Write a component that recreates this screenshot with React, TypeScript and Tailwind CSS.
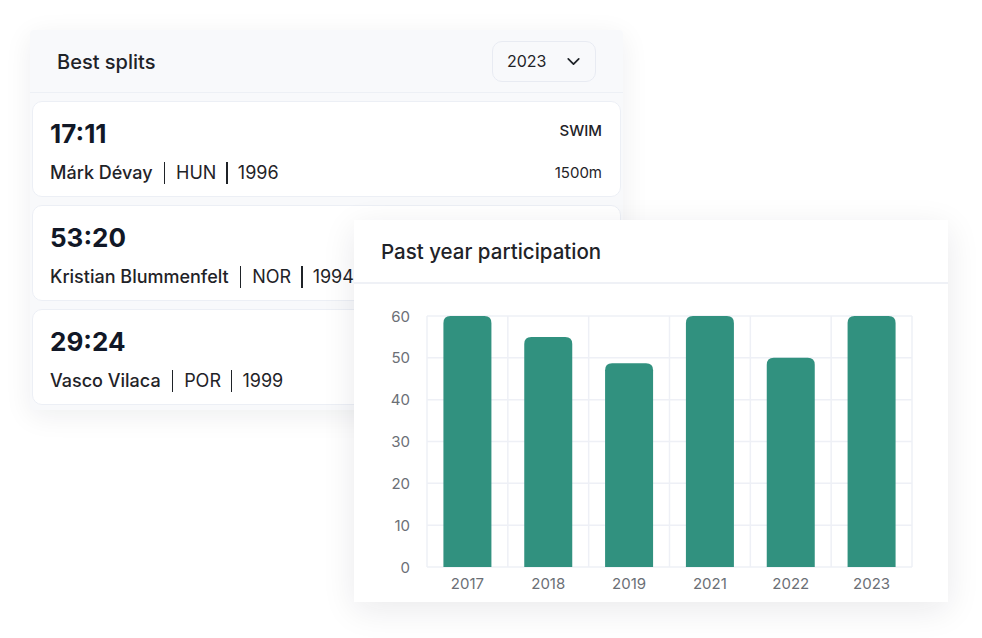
import { ChevronDown } from "lucide-react";

type Split = {
  time: string;
  name: string;
  country: string;
  born: string;
  sport?: string;
  distance?: string;
};

const SPLITS: Split[] = [
  { time: "17:11", name: "Márk Dévay", country: "HUN", born: "1996", sport: "SWIM", distance: "1500m" },
  { time: "53:20", name: "Kristian Blummenfelt", country: "NOR", born: "1994" },
  { time: "29:24", name: "Vasco Vilaca", country: "POR", born: "1999" },
];

const YEARS = [
  { year: "2017", value: 60 },
  { year: "2018", value: 55 },
  { year: "2019", value: 48.7 },
  { year: "2021", value: 60 },
  { year: "2022", value: 50 },
  { year: "2023", value: 60 },
];

const FONT = "font-['Inter','Liberation_Sans',sans-serif]";

function SplitRow({ s }: { s: Split }) {
  return (
    <div className="rounded-[10px] border border-[#eceff5] bg-white pl-[17px] pr-[18px] pt-[15px] pb-[11px]">
      <div className="flex items-start justify-between">
        <span className="text-[26px] leading-[34px] font-bold text-[#111827]">{s.time}</span>
        {s.sport && (
          <span className="mt-[4px] text-[15px] leading-[20px] font-medium text-[#1f2328]">{s.sport}</span>
        )}
      </div>
      <div className="mt-[10px] flex items-center justify-between">
        <div className="flex items-center text-[18px] leading-[24px] text-[#1f2328]">
          <span className="font-medium">{s.name}</span>
          <span className="mx-[11px] h-[22px] w-[1.5px] bg-[#1f2328]" />
          <span>{s.country}</span>
          <span className="mx-[10px] h-[22px] w-[1.5px] bg-[#1f2328]" />
          <span>{s.born}</span>
        </div>
        {s.distance && <span className="text-[15px] leading-[20px] text-[#1f2328]">{s.distance}</span>}
      </div>
    </div>
  );
}

function BestSplits() {
  return (
    <div className="w-[593px] overflow-hidden rounded-[4px] bg-[#f8f9fb] shadow-[0_6px_28px_rgba(17,24,39,0.07)]">
      <div className="flex h-[63px] items-center justify-between border-b border-[#edf0f5] pl-[27px] pr-[27px]">
        <span className="pt-[2px] text-[20px] font-medium text-[#1f2328]">Best splits</span>
        <div className="flex h-[41px] w-[104px] items-center justify-between rounded-[10px] border border-[#e8ebf2] bg-[#f8f9fb] pl-[14px] pr-[11px]">
          <span className="text-[16px] text-[#1f2328]">2023</span>
          <ChevronDown size={21} strokeWidth={2} className="text-[#1f2328]" />
        </div>
      </div>
      <div className="flex flex-col gap-[8px] px-[2px] pt-[8px] pb-[5px]">
        {SPLITS.map((s) => (
          <SplitRow key={s.time} s={s} />
        ))}
      </div>
    </div>
  );
}

function ParticipationChart() {
  // plot area in svg coordinates
  const left = 73;
  const right = 558;
  const top = 32;
  const bottom = 283;
  const max = 60;
  const colW = (right - left) / YEARS.length;
  const barW = 48;
  const y = (v: number) => bottom - (v / max) * (bottom - top);

  return (
    <div className="absolute left-[354px] top-[220px] w-[594px] bg-white shadow-[0_8px_32px_rgba(17,24,39,0.09)]">
      <div className="flex h-[64px] items-center border-b-[2px] border-[#eff1f6] px-[27px] pt-[3px]">
        <span className="text-[20.5px] font-medium text-[#1f2328]">Past year participation</span>
      </div>
      <svg width={594} height={318} className="block">
        {[0, 10, 20, 30, 40, 50, 60].map((t) => (
          <g key={t}>
            <line x1={left} x2={right} y1={y(t)} y2={y(t)} stroke="#eef0f6" strokeWidth={1.5} />
            <text
              x={56}
              y={y(t)}
              textAnchor="end"
              dominantBaseline="central"
              fontSize={15}
              fill="#6b6f76"
              fontFamily="Inter, 'Liberation Sans', sans-serif"
            >
              {t}
            </text>
          </g>
        ))}
        {YEARS.map((_, i) => (
          <line
            key={i}
            x1={left + colW * i}
            x2={left + colW * i}
            y1={top}
            y2={bottom}
            stroke="#eef0f6"
            strokeWidth={1.5}
          />
        ))}
        <line x1={right} x2={right} y1={top} y2={bottom} stroke="#eef0f6" strokeWidth={1.5} />
        {YEARS.map((d, i) => {
          const cx = left + colW * (i + 0.5);
          const x0 = cx - barW / 2;
          const y0 = y(d.value);
          const r = 7;
          const path = `M${x0},${bottom} L${x0},${y0 + r} Q${x0},${y0} ${x0 + r},${y0} L${x0 + barW - r},${y0} Q${x0 + barW},${y0} ${x0 + barW},${y0 + r} L${x0 + barW},${bottom} Z`;
          return (
            <g key={d.year}>
              <path d={path} fill="#31917f" />
              <text
                x={cx}
                y={299}
                textAnchor="middle"
                dominantBaseline="central"
                fontSize={15}
                fill="#6b6f76"
                fontFamily="Inter, 'Liberation Sans', sans-serif"
              >
                {d.year}
              </text>
            </g>
          );
        })}
      </svg>
    </div>
  );
}

export default function App() {
  return (
    <div className={`relative h-[638px] w-[982px] overflow-hidden bg-white ${FONT}`}>
      <div className="pl-[30px] pt-[30px]">
        <BestSplits />
      </div>
      <ParticipationChart />
    </div>
  );
}
